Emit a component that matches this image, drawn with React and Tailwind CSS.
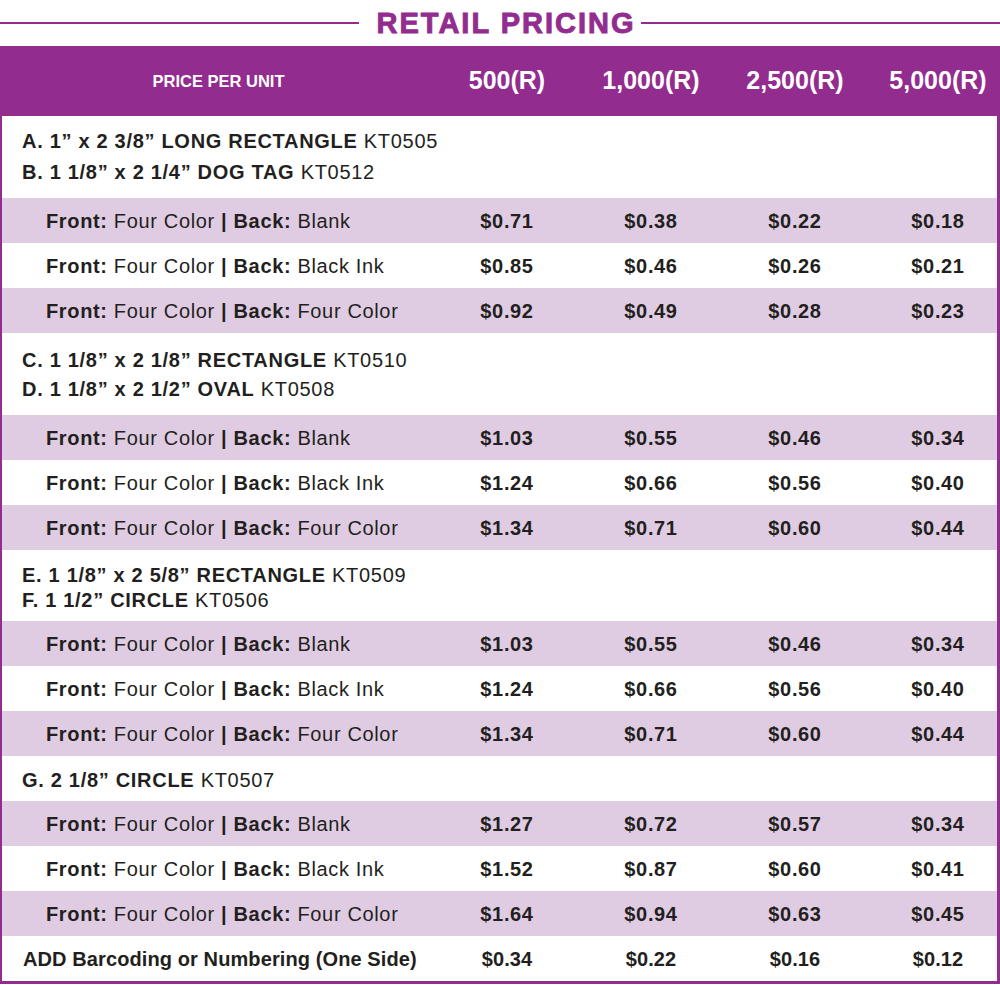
import React from "react";

const sections = [
  {
    lines: [
      ["A. 1” x 2 3/8” LONG RECTANGLE", "KT0505"],
      ["B. 1 1/8” x 2 1/4” DOG TAG", "KT0512"],
    ],
    cls: "pt-[10px] pb-[10px] leading-[31px]",
    rows: [
      ["Blank", "$0.71", "$0.38", "$0.22", "$0.18"],
      ["Black Ink", "$0.85", "$0.46", "$0.26", "$0.21"],
      ["Four Color", "$0.92", "$0.49", "$0.28", "$0.23"],
    ],
  },
  {
    lines: [
      ["C. 1 1/8” x 2 1/8” RECTANGLE", "KT0510"],
      ["D. 1 1/8” x 2 1/2” OVAL", "KT0508"],
    ],
    cls: "pt-[13px] pb-[11px] leading-[29px]",
    rows: [
      ["Blank", "$1.03", "$0.55", "$0.46", "$0.34"],
      ["Black Ink", "$1.24", "$0.66", "$0.56", "$0.40"],
      ["Four Color", "$1.34", "$0.71", "$0.60", "$0.44"],
    ],
  },
  {
    lines: [
      ["E. 1 1/8” x 2 5/8” RECTANGLE", "KT0509"],
      ["F. 1 1/2” CIRCLE", "KT0506"],
    ],
    cls: "pt-[13px] pb-[8px] leading-[25px]",
    rows: [
      ["Blank", "$1.03", "$0.55", "$0.46", "$0.34"],
      ["Black Ink", "$1.24", "$0.66", "$0.56", "$0.40"],
      ["Four Color", "$1.34", "$0.71", "$0.60", "$0.44"],
    ],
  },
  {
    lines: [["G. 2 1/8” CIRCLE", "KT0507"]],
    cls: "h-[45px] pt-[3px] flex flex-col justify-center leading-[25px]",
    rows: [
      ["Blank", "$1.27", "$0.72", "$0.57", "$0.34"],
      ["Black Ink", "$1.52", "$0.87", "$0.60", "$0.41"],
      ["Four Color", "$1.64", "$0.94", "$0.63", "$0.45"],
    ],
  },
];

function PriceCells({ prices }) {
  return (
    <>
      <div className="flex items-center justify-center font-bold">{prices[0]}</div>
      <div className="flex items-center justify-center font-bold">{prices[1]}</div>
      <div className="flex items-center justify-center font-bold">{prices[2]}</div>
      <div className="flex items-center justify-center pl-[12px] font-bold">{prices[3]}</div>
    </>
  );
}

export default function App() {
  return (
    <div
      className="w-[1000px] h-[985px] bg-white text-[#231f20] overflow-hidden"
      style={{ fontFamily: '"Liberation Sans", Arial, sans-serif' }}
    >
      <div className="h-[46px] flex items-center">
        <div className="flex-1 h-[2px] bg-[#922c8e]" />
        <div className="ml-[18px] mr-[6px] text-[29px] font-bold tracking-[2px] text-[#922c8e] leading-none [-webkit-text-stroke:0.9px_#922c8e]">
          RETAIL PRICING
        </div>
        <div className="flex-1 h-[2px] bg-[#922c8e]" />
      </div>
      <div className="border-l-2 border-r-[3px] border-b-[3px] border-[#922c8e]">
        <div className="h-[70px] bg-[#922c8e] text-white grid grid-cols-[433px_144px_144px_144px_1fr] items-center font-bold">
          <div className="text-center text-[16.5px]">PRICE PER UNIT</div>
          <div className="text-center text-[25px]">500(R)</div>
          <div className="text-center text-[25px]">1,000(R)</div>
          <div className="text-center text-[25px]">2,500(R)</div>
          <div className="text-center text-[25px] pl-[12px]">5,000(R)</div>
        </div>
        {sections.map((s, si) => (
          <div key={si}>
            <div className={`pl-[20px] text-[20px] tracking-[0.7px] ${s.cls}`}>
              {s.lines.map((l, li) => (
                <div key={li}>
                  <span className="font-bold">{l[0]}</span> {l[1]}
                </div>
              ))}
            </div>
            {s.rows.map((r, ri) => (
              <div
                key={ri}
                className={`h-[45px] grid grid-cols-[433px_144px_144px_144px_1fr] text-[20px] tracking-[0.65px] ${
                  ri % 2 === 0 ? "bg-[#dfcce3]" : "bg-white"
                }`}
              >
                <div className="flex items-center pl-[44px]">
                  <span className="font-bold">Front:</span>&nbsp;Four Color&nbsp;
                  <span className="font-bold">|</span>&nbsp;
                  <span className="font-bold">Back:</span>&nbsp;{r[0]}
                </div>
                <PriceCells prices={r.slice(1)} />
              </div>
            ))}
          </div>
        ))}
        <div className="h-[45px] grid grid-cols-[433px_144px_144px_144px_1fr] text-[20px] tracking-[0.1px] font-bold">
          <div className="flex items-center pl-[21px]">ADD Barcoding or Numbering (One Side)</div>
          <PriceCells prices={["$0.34", "$0.22", "$0.16", "$0.12"]} />
        </div>
      </div>
    </div>
  );
}
